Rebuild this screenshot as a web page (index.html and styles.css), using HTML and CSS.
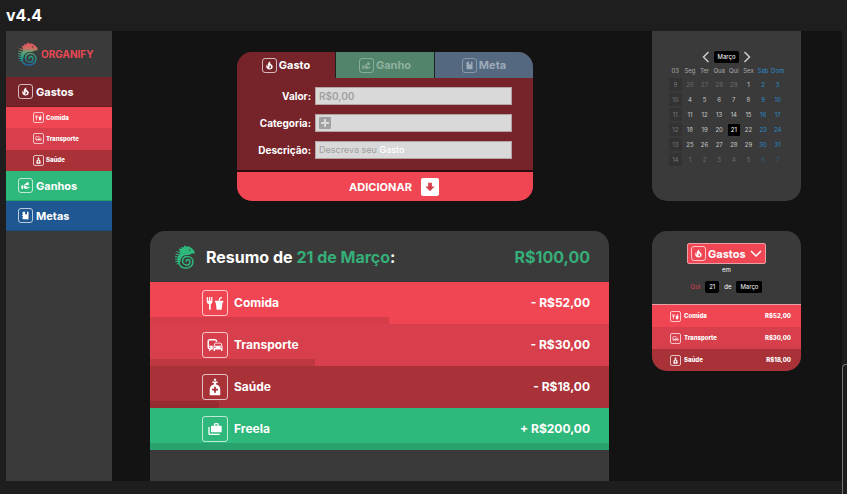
FILE: index.html
```html
<!DOCTYPE html>
<html lang="pt-BR">
<head>
<meta charset="utf-8">
<meta name="viewport" content="width=device-width, initial-scale=1">
<title>Organify v4.4</title>
<link rel="stylesheet" href="styles.css">
</head>
<body>
<svg class="sprite" aria-hidden="true">
  <defs>
    <linearGradient id="skin" gradientUnits="userSpaceOnUse" x1="0" y1="0" x2="0" y2="48">
      <stop offset="0" stop-color="#e0525a"/><stop offset=".26" stop-color="#d2695f"/><stop offset=".42" stop-color="#5fa577"/><stop offset=".68" stop-color="#239284"/><stop offset="1" stop-color="#2464a8"/>
    </linearGradient>
    <symbol id="fire" viewBox="0 0 24 24"><path d="M17.66 11.2c-.23-.3-.51-.56-.77-.82-.67-.6-1.43-1.03-2.07-1.66C13.33 7.26 13 4.85 13.95 3c-.95.23-1.78.75-2.49 1.32-2.59 2.08-3.61 5.75-2.39 8.9.04.1.08.2.08.33 0 .22-.15.42-.35.5-.23.1-.47.04-.66-.12a.58.58 0 0 1-.14-.17c-1.13-1.43-1.31-3.48-.55-5.12C5.78 10 4.87 12.3 5 14.47c.06.5.12 1 .29 1.5.14.6.41 1.2.71 1.73 1.08 1.73 2.95 2.97 4.96 3.22 2.14.27 4.43-.12 6.07-1.6 1.83-1.66 2.47-4.32 1.53-6.6l-.13-.26c-.21-.46-.77-1.26-.77-1.26m-3.16 6.3c-.28.24-.74.5-1.1.6-1.12.4-2.24-.16-2.9-.82 1.19-.28 1.9-1.16 2.11-2.05.17-.8-.15-1.46-.28-2.23-.12-.74-.1-1.37.17-2.06.19.38.39.76.63 1.06.77 1 1.98 1.44 2.24 2.8.04.14.06.28.06.43.03.82-.33 1.72-.93 2.27Z"/></symbol>
    <symbol id="food" viewBox="0 0 24 24"><path d="M1 4h1.600v5h1.300V4h1.700v5h1.300V4h1.600v6.200c0 1.500-.9 2.600-2.200 3V21H4v-7.800c-2-.4-3-1.500-3-3zM12 9h4.800l.7-3.600 3.500-1.600.6 1.400-2.800 1.300L18.400 9H23v2.200h-1L20.800 21h-6.600L13 11.200h-1z"/></symbol>
    <symbol id="commute" viewBox="0 0 24 24"><path d="M12 4H5C3.340 4 2 5.340 2 7v8c0 1.660 1.340 3 3 3l-1 1v1h1l2-2.030L9 18v-5H4V5.980L13 6v2h2V7c0-1.660-1.340-3-3-3zM5 14c.55 0 1 .45 1 1s-.45 1-1 1-1-.45-1-1 .45-1 1-1zm15.570-4.340c-.14-.4-.52-.66-.97-.66h-7.190c-.46 0-.83.26-.98.66L10 13.770l.01 5.510c0 .38.31.72.69.72h.62c.38 0 .68-.38.68-.76V18h8v1.240c0 .38.31.76.69.76h.61c.38 0 .69-.34.69-.72l.01-1.370v-4.140l-1.430-4.110zm-8.160.34h7.190l1.030 3h-9.250l1.030-3zM12 16c-.55 0-1-.45-1-1s.45-1 1-1 1 .45 1 1-.45 1-1 1zm8 0c-.55 0-1-.45-1-1s.45-1 1-1 1 .45 1 1-.45 1-1 1z"/></symbol>
    <symbol id="bottle" viewBox="0 0 24 24"><path fill-rule="evenodd" d="M10.500 1h3v2.500h-3zM8.500 4.500h7v2h-2v2c3 .6 5.500 3 5.500 6V23H5v-8.500c0-3 2.500-5.400 5.500-6v-2h-2zM10.800 11.500v2.800H8v2.400h2.800v2.800h2.400v-2.800H16v-2.400h-2.800v-2.800z"/></symbol>
    <symbol id="cases" viewBox="0 0 24 24"><path fill-rule="evenodd" d="M7 7h3.500V5c0-1.100.9-2 2-2h3c1.100 0 2 .9 2 2v2H21a1 1 0 0 1 1 1v8a1 1 0 0 1-1 1H7a1 1 0 0 1-1-1V8a1 1 0 0 1 1-1zm5.500 0h3V5h-3zM2 9h2v10h15v2H4a2 2 0 0 1-2-2z"/></symbol>
    <symbol id="hand" viewBox="0 0 24 24"><path d="M1 11h4v10H1zM7 12h3l5 2.200c1.200.5 1 2.300-.4 2.300H12l.2.8h3.300l5.500-2c1.500 0 2 1 2 2L14.500 21 7 19.500z"/><circle cx="17" cy="7" r="4"/><circle cx="11" cy="9" r="2"/></symbol>
    <symbol id="book" viewBox="0 0 24 24"><path d="M5 2h6v8l2.500-2 2.500 2V2h4v20H5v-2.500H2.500v-2H5V13H2.500v-2H5V6.500H2.500v-2H5z"/></symbol>
    <symbol id="down" viewBox="0 0 24 24"><path d="M7.500 2h9v9H23L12 22 1 11h6.500z"/></symbol>
    <symbol id="chameleon" viewBox="0 0 40 48">
      <path stroke="none" d="M9 12 8 7 13 8 12 4 17 5 19 1 23 3 28 3 33 6 39 12 39 17 34 17 28 20 21 20C14 22 11 27 11 33L8 36 5 31C5 24 7 20 11 17Z"/>
      <path fill="none" stroke-width="2" d="M3 13 15 18M1 18 12 21M0 23 10 25M0 28 9 29M1 33 9 33M3 38 10 36"/>
      <path fill="none" stroke-width="3" stroke-linecap="round" d="M9 25C5 36 10 46 21 46A13 13 0 0 0 36 33 11 11 0 0 0 25 23 9 9 0 0 0 15 32 8 8 0 0 0 23 40 6 6 0 0 0 30 34 5 5 0 0 0 25 29 4 4 0 0 0 22 33"/>
      <circle class="eye" cx="29" cy="10" r="1.500"/>
    </symbol>
  </defs>
</svg>

<h1 class="version">v4.4</h1>

<div class="app">
  <aside class="sidebar">
    <a class="brand" href="#"><svg class="brand-mark"><use href="#chameleon"/></svg>ORGANIFY</a>
    <nav>
      <a class="nav-item wine" href="#"><span class="badge medium"><svg><use href="#fire"/></svg></span>Gastos</a>
      <div class="nav-group">
        <a class="nav-sub red-1" href="#"><span class="badge small"><svg><use href="#food"/></svg></span>Comida</a>
        <a class="nav-sub red-2" href="#"><span class="badge small"><svg><use href="#commute"/></svg></span>Transporte</a>
        <a class="nav-sub red-3" href="#"><span class="badge small"><svg><use href="#bottle"/></svg></span>Saúde</a>
      </div>
      <a class="nav-item green" href="#"><span class="badge medium"><svg><use href="#hand"/></svg></span>Ganhos</a>
      <a class="nav-item blue" href="#"><span class="badge medium"><svg><use href="#book"/></svg></span>Metas</a>
    </nav>
  </aside>

  <main class="board">
    <form class="entry">
      <div class="tabs">
        <button type="button" class="tab active"><span class="badge medium"><svg><use href="#fire"/></svg></span>Gasto</button>
        <button type="button" class="tab gain"><span class="badge medium"><svg><use href="#hand"/></svg></span>Ganho</button>
        <button type="button" class="tab goal"><span class="badge medium"><svg><use href="#book"/></svg></span>Meta</button>
      </div>
      <div class="fields">
        <label for="value">Valor:</label>
        <input class="field amount" id="value" type="text" placeholder="R$0,00">
        <label for="category">Categoria:</label>
        <div class="field"><button type="button" class="add" id="category" aria-label="Escolher categoria"><svg viewBox="0 0 12 12"><path d="M6 2v8M2 6h8"/></svg></button></div>
        <label for="description">Descrição:</label>
        <div class="hinted">
          <input class="field" id="description" type="text">
          <span class="hint">Descreva seu <b>Gasto</b></span>
        </div>
      </div>
      <button type="submit" class="submit">ADICIONAR <span class="arrow"><svg><use href="#down"/></svg></span></button>
    </form>

    <section class="calendar">
      <div class="month-nav">
        <button type="button" aria-label="Mês anterior"><svg viewBox="0 0 8 12"><path d="M6.500 1 1.500 6l5 5"/></svg></button>
        <span class="chip">Março</span>
        <button type="button" aria-label="Próximo mês"><svg viewBox="0 0 8 12"><path d="m1.500 1 5 5-5 5"/></svg></button>
      </div>
      <table>
        <thead><tr><th>03</th><th>Seg</th><th>Ter</th><th>Qua</th><th>Qui</th><th>Sex</th><th>Sab</th><th>Dom</th></tr></thead>
        <tbody>
          <tr><th>9</th><td class="out">26</td><td class="out">27</td><td class="out">28</td><td class="out">29</td><td>1</td><td>2</td><td>3</td></tr>
          <tr><th>10</th><td>4</td><td>5</td><td>6</td><td>7</td><td>8</td><td>9</td><td>10</td></tr>
          <tr><th>11</th><td>11</td><td>12</td><td>13</td><td>14</td><td>15</td><td>16</td><td>17</td></tr>
          <tr><th>12</th><td>18</td><td>19</td><td>20</td><td><span class="today">21</span></td><td>22</td><td>23</td><td>24</td></tr>
          <tr><th>13</th><td>25</td><td>26</td><td>27</td><td>28</td><td>29</td><td>30</td><td>31</td></tr>
          <tr><th>14</th><td class="out">1</td><td class="out">2</td><td class="out">3</td><td class="out">4</td><td class="out">5</td><td class="out">6</td><td class="out">7</td></tr>
        </tbody>
      </table>
    </section>

    <section class="summary">
      <header class="summary-head">
        <svg class="summary-mark"><use href="#chameleon"/></svg>
        <h2>Resumo de <em>21 de Março</em>:</h2>
        <strong>R$100,00</strong>
      </header>
      <ul>
        <li class="row red-1"><span class="badge large"><svg><use href="#food"/></svg></span>Comida<span class="sum">- R$52,00</span><i class="share" style="width:52%"></i></li>
        <li class="row red-2"><span class="badge large"><svg><use href="#commute"/></svg></span>Transporte<span class="sum">- R$30,00</span><i class="share" style="width:36%"></i></li>
        <li class="row red-3"><span class="badge large"><svg><use href="#bottle"/></svg></span>Saúde<span class="sum">- R$18,00</span><i class="share" style="width:15%"></i></li>
        <li class="row green"><span class="badge large"><svg><use href="#cases"/></svg></span>Freela<span class="sum">+ R$200,00</span><i class="share" style="width:100%"></i></li>
      </ul>
    </section>

    <section class="digest">
      <div class="digest-head">
        <div class="picker">
          <span class="badge medium"><svg><use href="#fire"/></svg></span>
          <select aria-label="Tipo"><option>Gastos</option><option>Ganhos</option><option>Metas</option></select>
          <svg class="chevron" viewBox="0 0 12 8"><path d="m1 1 5 5 5-5"/></svg>
        </div>
        <span>em</span>
        <div class="date"><span class="weekday">Qui</span><span class="chip">21</span><span>de</span><span class="chip">Março</span></div>
      </div>
      <ul>
        <li class="mini red-1"><span class="badge small"><svg><use href="#food"/></svg></span>Comida<span class="sum">R$52,00</span></li>
        <li class="mini red-2"><span class="badge small"><svg><use href="#commute"/></svg></span>Transporte<span class="sum">R$30,00</span></li>
        <li class="mini red-3"><span class="badge small"><svg><use href="#bottle"/></svg></span>Saúde<span class="sum">R$18,00</span></li>
      </ul>
    </section>
  </main>
</div>
<div class="drawer"></div>
</body>
</html>
```

FILE: styles.css
```css
* { box-sizing: border-box; }

body {
  margin: 0;
  min-height: 100vh;
  display: flex;
  flex-direction: column;
  padding: 0 5px 13px 6px;
  background: #1e1e1e;
  color: #fff;
  font: 700 11px/14px Inter, "Liberation Sans", sans-serif;
  position: relative;
  overflow: hidden;
}

h1, h2, ul { margin: 0; padding: 0; }
ul { list-style: none; }
a { color: inherit; text-decoration: none; }
button, input, select { font: inherit; color: inherit; border: 0; padding: 0; margin: 0; background: none; min-width: 0; }
svg { display: block; fill: currentColor; }
.sprite { position: absolute; width: 0; height: 0; }

.version { font-size: 16px; line-height: 31px; }

.app { flex: 1; display: flex; background: #131313; }

.wine { background: #762329; }
.red-1 { background: #f04653; }
.red-2 { background: #d63f4b; }
.red-3 { background: #a93239; }
.green { background: #2fb87b; }
.blue { background: #1f5793; }

/* Framed icons */
.badge { display: grid; place-items: center; flex: none; border: 1px solid #ffffffb0; }
.badge.small { width: 11px; height: 11px; border-radius: 2px; }
.badge.small svg { width: 7px; height: 7px; }
.badge.medium { width: 15px; height: 15px; border-radius: 3px; }
.badge.medium svg { width: 11px; height: 11px; }
.badge.medium svg:has([href="#hand"]), .badge.medium svg:has([href="#book"]) { width: 9px; height: 9px; }
.badge.large { width: 26px; height: 26px; border-radius: 3px; }
.badge.large svg { width: 18px; height: 18px; }
.badge.large svg:has([href="#cases"]) { width: 16px; height: 16px; }

/* Sidebar */
.sidebar { width: 106px; flex: none; background: #3a3a3a; }
.brand { display: flex; align-items: center; gap: 3px; height: 46px; padding-left: 12px; color: #ea4855; font-size: 10px; }
.brand-mark { width: 20px; height: 24px; fill: url(#skin); stroke: url(#skin); }
.nav-item { display: flex; align-items: center; gap: 3px; height: 30px; padding: 0 12px; border-bottom: 1px solid #0002; }
.nav-group { display: grid; grid-template-rows: repeat(3, 1fr); height: 64px; }
.nav-sub { display: flex; align-items: center; gap: 2px; padding-left: 27px; font-size: 6px; font-weight: 800; }

/* Main area */
.board {
  flex: 1;
  display: grid;
  grid-template-columns: 1fr 149px;
  grid-template-rows: auto 1fr;
  gap: 30px 43px;
  padding: 0 41px 0 38px;
}

/* Entry form */
.entry { width: 296px; margin-left: 87px; align-self: end; border-radius: 15px; overflow: hidden; background: #762329; }
.tabs { display: grid; grid-template-columns: repeat(3, 1fr); gap: 1px; background: #202020; }
.tab { display: flex; align-items: center; justify-content: center; gap: 2px; height: 26px; }
.tab.active { background: #762329; }
.tab.gain { background: #52846c; color: #8fb09f; }
.tab.goal { background: #54697f; color: #9caaba; }
.tab.gain .badge, .tab.goal .badge { border-color: #ffffff50; }
.fields { display: grid; grid-template-columns: 74px 1fr; gap: 9px 4px; align-items: center; padding: 9px 21px 11px 0; font-size: 10px; }
.fields label { text-align: right; }
.field { display: flex; align-items: center; width: 100%; height: 18px; padding: 0 3px; background: #d9d9d9; border: 1px solid #b5a3a4; border-radius: 0; }
.amount { font-weight: 600; }
.amount::placeholder { color: #a0a0a0; opacity: 1; }
.hinted { position: relative; color: #333; }
.hint { position: absolute; left: 4px; top: 2px; color: #a0a0a0; font-size: 9px; font-weight: 400; pointer-events: none; }
.hint b { color: #fff; font-weight: 500; }
.add { width: 12px; height: 12px; background: #a0a0a0; border-radius: 1px; }
.add svg { stroke: #d9d9d9; stroke-width: 2; }
.submit { display: flex; align-items: center; justify-content: center; gap: 9px; width: 100%; height: 31px; padding-left: 18px; background: #f04653; border-top: 2px solid #2a0d10; }
.arrow { display: grid; place-items: center; width: 18px; height: 18px; border-radius: 2px; background: #fff; color: #d63f4b; }
.arrow svg { width: 10px; height: 10px; }

/* Calendar */
.calendar { padding: 20px 16px 34px; background: #3a3a3a; border-radius: 0 0 15px 15px; font-size: 6px; font-weight: 400; line-height: 12px; }
.month-nav { display: flex; align-items: center; justify-content: center; gap: 4px; }
.month-nav svg { width: 8px; height: 12px; fill: none; stroke: #ccc; stroke-width: 1.500; }
.chip { padding: 0 4px; background: #000; border-radius: 2px; }
table { width: 100%; height: 102px; margin-top: 2px; border-collapse: separate; border-spacing: 0; table-layout: fixed; text-align: center; color: #c8c8c8; }
th, td { padding: 0; font-weight: 400; line-height: 12px; }
thead th { color: #aaa; }
tbody th { color: #777; background: #333; border: 1px solid #3a3a3a; }
td:nth-child(n+7), thead th:nth-child(n+7) { color: #288bc8; }
.out { color: #6b6b6b; }
td.out:nth-child(n+7) { color: #2f5e7c; }
.today { display: block; margin: 0 1px; background: #000; border-radius: 1px; color: #fff; }

/* Summary */
.summary { background: #3a3a3a; border-radius: 15px 15px 0 0; overflow: hidden; }
.summary-head { display: flex; align-items: center; height: 51px; padding: 0 19px 0 25px; font-size: 16px; line-height: 20px; }
.summary-head strong { margin-left: auto; color: #36ae79; font-weight: 700; }
.summary-mark { width: 20px; height: 24px; margin-right: 11px; fill: #2fb87b; stroke: #2fb87b; }
h2 { font-size: 16px; }
em { font-style: normal; color: #36ae79; }
.row { position: relative; display: flex; align-items: center; gap: 6px; height: 42px; padding: 0 19px 0 52px; font-size: 12px; }
.sum { margin-left: auto; }
.share { position: absolute; left: 0; bottom: 0; height: 7px; background: #0000001c; }
.row .badge { z-index: 1; }
.eye { fill: #3a3a3a; stroke: none; }

/* Digest */
.digest { align-self: start; background: #3a3a3a; border-radius: 15px; overflow: hidden; font-size: 6px; font-weight: 800; }
.digest-head { display: flex; flex-direction: column; align-items: center; padding: 12px 0 11px; font-weight: 400; line-height: 12px; border-bottom: 1px solid #e8a0a6; }
.picker { display: flex; align-items: center; gap: 2px; padding: 2px 3px; background: #f04653; border: 1px solid #e8a0a6; border-radius: 2px; }
.picker select { appearance: none; width: 39px; font-size: 11px; font-weight: 700; line-height: 14px; }
.chevron { width: 12px; height: 8px; margin-left: 1px; fill: none; stroke: #fff; stroke-width: 1.500; }
.date { display: flex; gap: 5px; margin-top: 5px; }
.weekday { color: #d63f4b; }
.mini { display: flex; align-items: center; gap: 3px; height: 22px; padding: 0 10px 0 18px; }

/* Edge of the neighbouring panel */
.drawer { position: absolute; right: 0; top: 364px; bottom: 0; width: 5px; background: #1c1c1c; border: 1px solid #777; border-width: 1px 0 0 1px; border-radius: 4px 0 0 0; }
```
